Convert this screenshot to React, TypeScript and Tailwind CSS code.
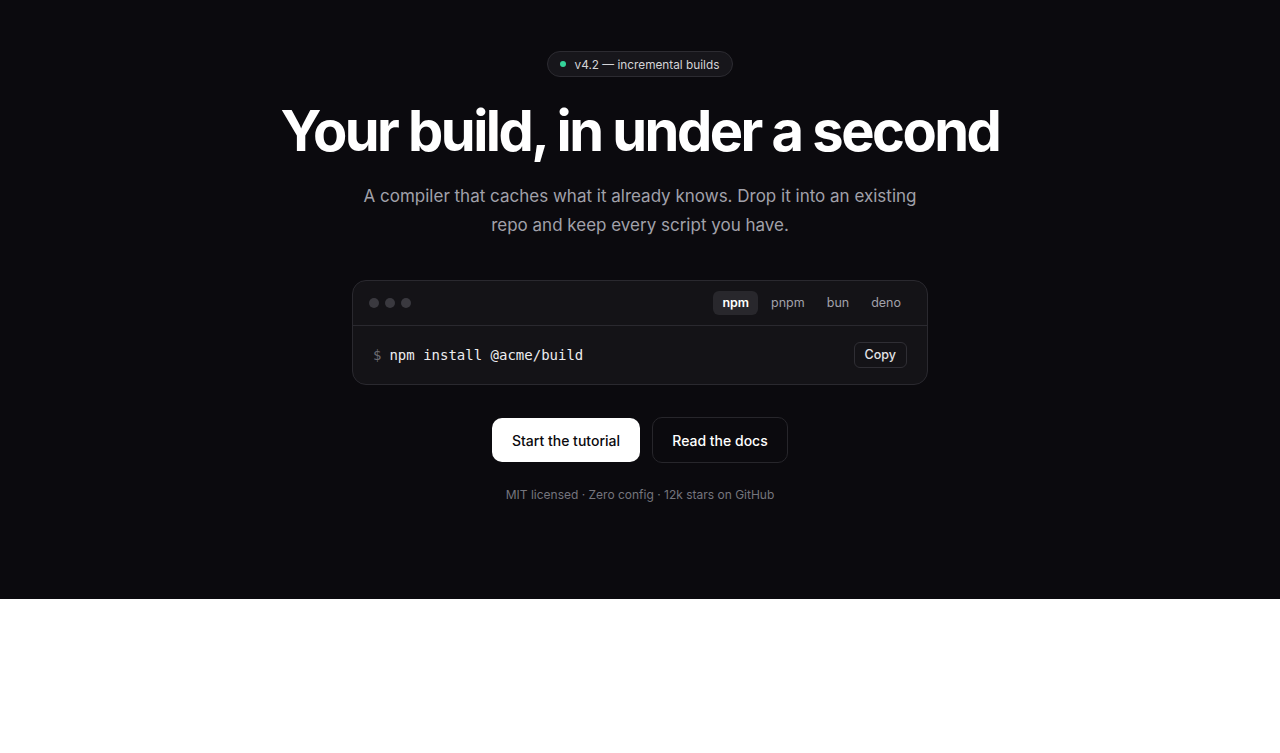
import React from "react";

export default function App() {
  const tabs = ["npm", "pnpm", "bun", "deno"];
  return (
    <div className="min-h-[753px] bg-white" style={{ fontFamily: "Inter, 'Noto Sans', sans-serif" }}>
      <section className="bg-[#0b0a0e] h-[599px] flex flex-col items-center pt-[51px]">
        <div className="flex items-center gap-[9px] h-[26px] pl-[12px] pr-[13px] rounded-full border border-[#2c2b31] bg-[#17161b] text-[11.8px] leading-[16px] text-[#d4d4d8]">
          <span className="w-[6px] h-[6px] rounded-full bg-[#34d399]" />
          <span className="pt-[1px]">v4.2 — incremental builds</span>
        </div>
        <h1 className="mt-[23px] text-[56px] leading-[62px] font-bold tracking-[-0.045em] text-white">
          Your build, in under a second
        </h1>
        <p className="mt-[20px] max-w-[580px] text-center text-[17px] leading-[29px] text-[#a1a1aa]">
          A compiler that caches what it already knows. Drop it into an existing repo and keep every script you have.
        </p>
        <div className="mt-[40px] w-[576px] rounded-[14px] border border-[#2a292f] bg-[#141317]">
          <div className="h-[45px] flex items-center justify-between pl-[16px] pr-[17px] border-b border-[#2a292f]">
            <div className="flex gap-[6px]">
              <span className="w-[10px] h-[10px] rounded-full bg-[#3a393f]" />
              <span className="w-[10px] h-[10px] rounded-full bg-[#3a393f]" />
              <span className="w-[10px] h-[10px] rounded-full bg-[#3a393f]" />
            </div>
            <div className="flex items-center gap-[4px]">
              {tabs.map((t, i) => (
                <span
                  key={t}
                  className={
                    i === 0
                      ? "h-[24px] px-[9px] flex items-center rounded-[6px] bg-[#28272c] text-[12.5px] font-semibold text-white"
                      : "h-[24px] px-[9px] flex items-center rounded-[6px] text-[12.5px] text-[#a1a1aa]"
                  }
                >
                  {t}
                </span>
              ))}
            </div>
          </div>
          <div className="h-[58px] flex items-center justify-between pl-[20px] pr-[20px]">
            <div className="text-[14px]" style={{ fontFamily: "'DejaVu Sans Mono', monospace" }}>
              <span className="text-[#6b6b73]">$</span>
              <span className="text-[#ededf0] ml-[8px]">npm install @acme/build</span>
            </div>
            <button className="h-[26px] px-[10px] rounded-[6px] border border-[#2f2e34] bg-[#141317] text-[12.5px] font-medium text-[#e4e4e7]">
              Copy
            </button>
          </div>
        </div>
        <div className="mt-[32px] flex items-center gap-[12px]">
          <button className="h-[44px] w-[148px] rounded-[10px] bg-white text-[14px] font-medium text-[#0b0a0e]">
            Start the tutorial
          </button>
          <button className="h-[46px] w-[136px] rounded-[10px] border border-[#27262b] bg-[#0b0a0e] text-[14px] font-medium text-white">
            Read the docs
          </button>
        </div>
        <p className="mt-[24px] text-[12px] leading-[16px] text-[#75757d]">MIT licensed · Zero config · 12k stars on GitHub</p>
      </section>
    </div>
  );
}
